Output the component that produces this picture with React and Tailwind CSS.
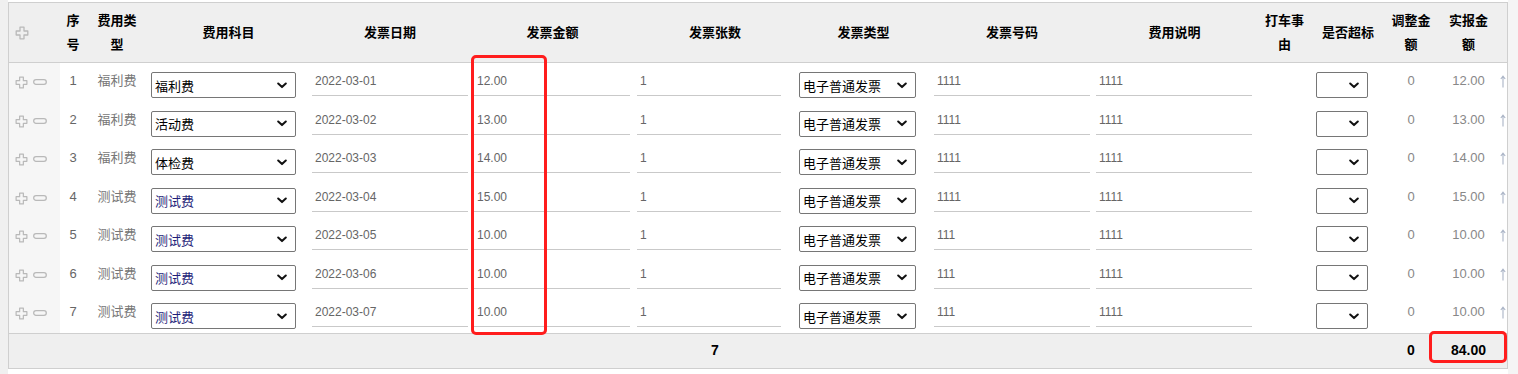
import React from "react";

const rows = [
  { n: 1, type: "福利费", sub: "福利费", date: "2022-03-01", amt: "12.00", no: "1111", real: "12.00" },
  { n: 2, type: "福利费", sub: "活动费", date: "2022-03-02", amt: "13.00", no: "1111", real: "13.00" },
  { n: 3, type: "福利费", sub: "体检费", date: "2022-03-03", amt: "14.00", no: "1111", real: "14.00" },
  { n: 4, type: "测试费", sub: "测试费", date: "2022-03-04", amt: "15.00", no: "1111", real: "15.00" },
  { n: 5, type: "测试费", sub: "测试费", date: "2022-03-05", amt: "10.00", no: "111", real: "10.00" },
  { n: 6, type: "测试费", sub: "测试费", date: "2022-03-06", amt: "10.00", no: "111", real: "10.00" },
  { n: 7, type: "测试费", sub: "测试费", date: "2022-03-07", amt: "10.00", no: "111", real: "10.00" },
];

const cols =
  "grid grid-cols-[51px_26px_62px_161px_162px_163px_162px_135px_162px_163px_57px_70px_56px_59px_1fr]";

const Plus = ({ size = 13 }) => (
  <svg width={size} height={size} viewBox="0 0 14 14" fill="none">
    <path
      d="M5 1.2h4v3.8h3.8v4h-3.8v3.8h-4v-3.8h-3.8v-4h3.8z"
      stroke="#b9b9b9"
      strokeWidth="1.3"
      strokeLinejoin="round"
    />
  </svg>
);

const Minus = () => (
  <svg width="14" height="6" viewBox="0 0 14 6" fill="none">
    <rect x="0.7" y="0.7" width="12.6" height="4.6" rx="2.3" stroke="#b9b9b9" strokeWidth="1.3" />
  </svg>
);

const Chevron = () => (
  <svg width="10" height="7" viewBox="0 0 10 7" fill="none">
    <path d="M1.2 1.5l3.8 3.6 3.8-3.6" stroke="#111" strokeWidth="2" strokeLinecap="round" strokeLinejoin="round" />
  </svg>
);

const Arrow = () => (
  <svg width="6" height="13" viewBox="0 0 6 13" fill="none">
    <path d="M3 12.5V1.5M0.8 4L3 1.2 5.2 4" stroke="#aab4c6" strokeWidth="1.1" />
  </svg>
);

const Select = ({ value, w, color = "text-black" }) => (
  <div
    className={`mt-[9px] h-[26px] border border-[#767676] rounded-[2px] bg-white flex items-center justify-between pl-[3px] pr-[8px] ${w}`}
  >
    <span className={`text-[13px] leading-[20px] pt-[3px] ${color}`}>{value}</span>
    <Chevron />
  </div>
);

const Field = ({ value, w }) => (
  <div className={`h-[33px] pt-[8px] pl-[3px] border-b border-[#c9c9c9] text-[12px] leading-[20px] text-[#666] ${w}`}>
    {value}
  </div>
);

export default function App() {
  return (
    <div
      className="flex h-[374px] bg-white"
      style={{ fontFamily: '"Liberation Sans", "Noto Sans CJK SC", sans-serif' }}
    >
      <div className="w-[8px] shrink-0 bg-[#f0f0f0]" />
      <div className="w-[1500px] shrink-0 pt-[2px]">
        <div className="relative border-l border-r border-t border-[#cfcfcf] overflow-hidden">
          {/* header */}
          <div className={`${cols} h-[60px] bg-[#efefef] border-b border-[#cfcfcf] items-center text-[13px] font-bold text-black text-center leading-[24px]`}>
            <div className="flex pl-[6px] pt-[1px]">
              <Plus size={14} />
            </div>
            <div>序<br />号</div>
            <div>费用类<br />型</div>
            <div>费用科目</div>
            <div>发票日期</div>
            <div>发票金额</div>
            <div>发票张数</div>
            <div>发票类型</div>
            <div>发票号码</div>
            <div>费用说明</div>
            <div>打车事<br />由</div>
            <div>是否超标</div>
            <div>调整金<br />额</div>
            <div>实报金<br />额</div>
            <div />
          </div>

          {/* body */}
          {rows.map((r) => (
            <div key={r.n} className={`${cols} h-[38.5px] items-start`}>
              <div className="h-full bg-[#f6f6f6] flex items-start gap-[5px] pl-[6px] pt-[13px]">
                <Plus />
                <div className="pt-[3px]">
                  <Minus />
                </div>
              </div>
              <div className="pt-[8px] text-center text-[13px] leading-[20px] text-[#666]">{r.n}</div>
              <div className="pt-[8px] text-center text-[13px] leading-[20px] text-[#777]">{r.type}</div>
              <div className="pl-[3px]">
                <Select value={r.sub} w="w-[145px]" color={r.sub === "测试费" ? "text-[#1f1f7a]" : "text-black"} />
              </div>
              <div className="pl-[3px]">
                <Field value={r.date} w="w-[156px]" />
              </div>
              <div className="pl-[3px]">
                <Field value={r.amt} w="w-[156px]" />
              </div>
              <div className="pl-[3px]">
                <Field value="1" w="w-[144px]" />
              </div>
              <div className="pl-[3px]">
                <Select value="电子普通发票" w="w-[117px]" />
              </div>
              <div className="pl-[3px]">
                <Field value={r.no} w="w-[156px]" />
              </div>
              <div className="pl-[3px]">
                <Field value="1111" w="w-[156px]" />
              </div>
              <div />
              <div className="pl-[3px]">
                <Select value="" w="w-[52px]" />
              </div>
              <div className="pt-[8px] text-center text-[13px] leading-[20px] text-[#888]">0</div>
              <div className="pt-[8px] text-center text-[13px] leading-[20px] text-[#888]">{r.real}</div>
              <div className="pt-[12px] pl-[2px]">
                <Arrow />
              </div>
            </div>
          ))}

          {/* footer */}
          <div className={`${cols} h-[36px] bg-[#efefef] border-t border-b border-[#cfcfcf] items-center text-[14px] font-bold text-black text-center`}>
            <div />
            <div />
            <div />
            <div />
            <div />
            <div />
            <div>7</div>
            <div />
            <div />
            <div />
            <div />
            <div />
            <div>0</div>
            <div>84.00</div>
            <div />
          </div>

          {/* highlight boxes */}
          <div className="absolute left-[462px] top-[52px] w-[76px] h-[280px] border-[3px] border-[#ff1d1d] rounded-[5px]" />
          <div className="absolute left-[1420px] top-[328px] w-[78px] h-[32px] border-[3px] border-[#ff1d1d] rounded-[5px]" />
        </div>
      </div>
      <div className="flex-1 bg-[#f5f5f5]" />
    </div>
  );
}
